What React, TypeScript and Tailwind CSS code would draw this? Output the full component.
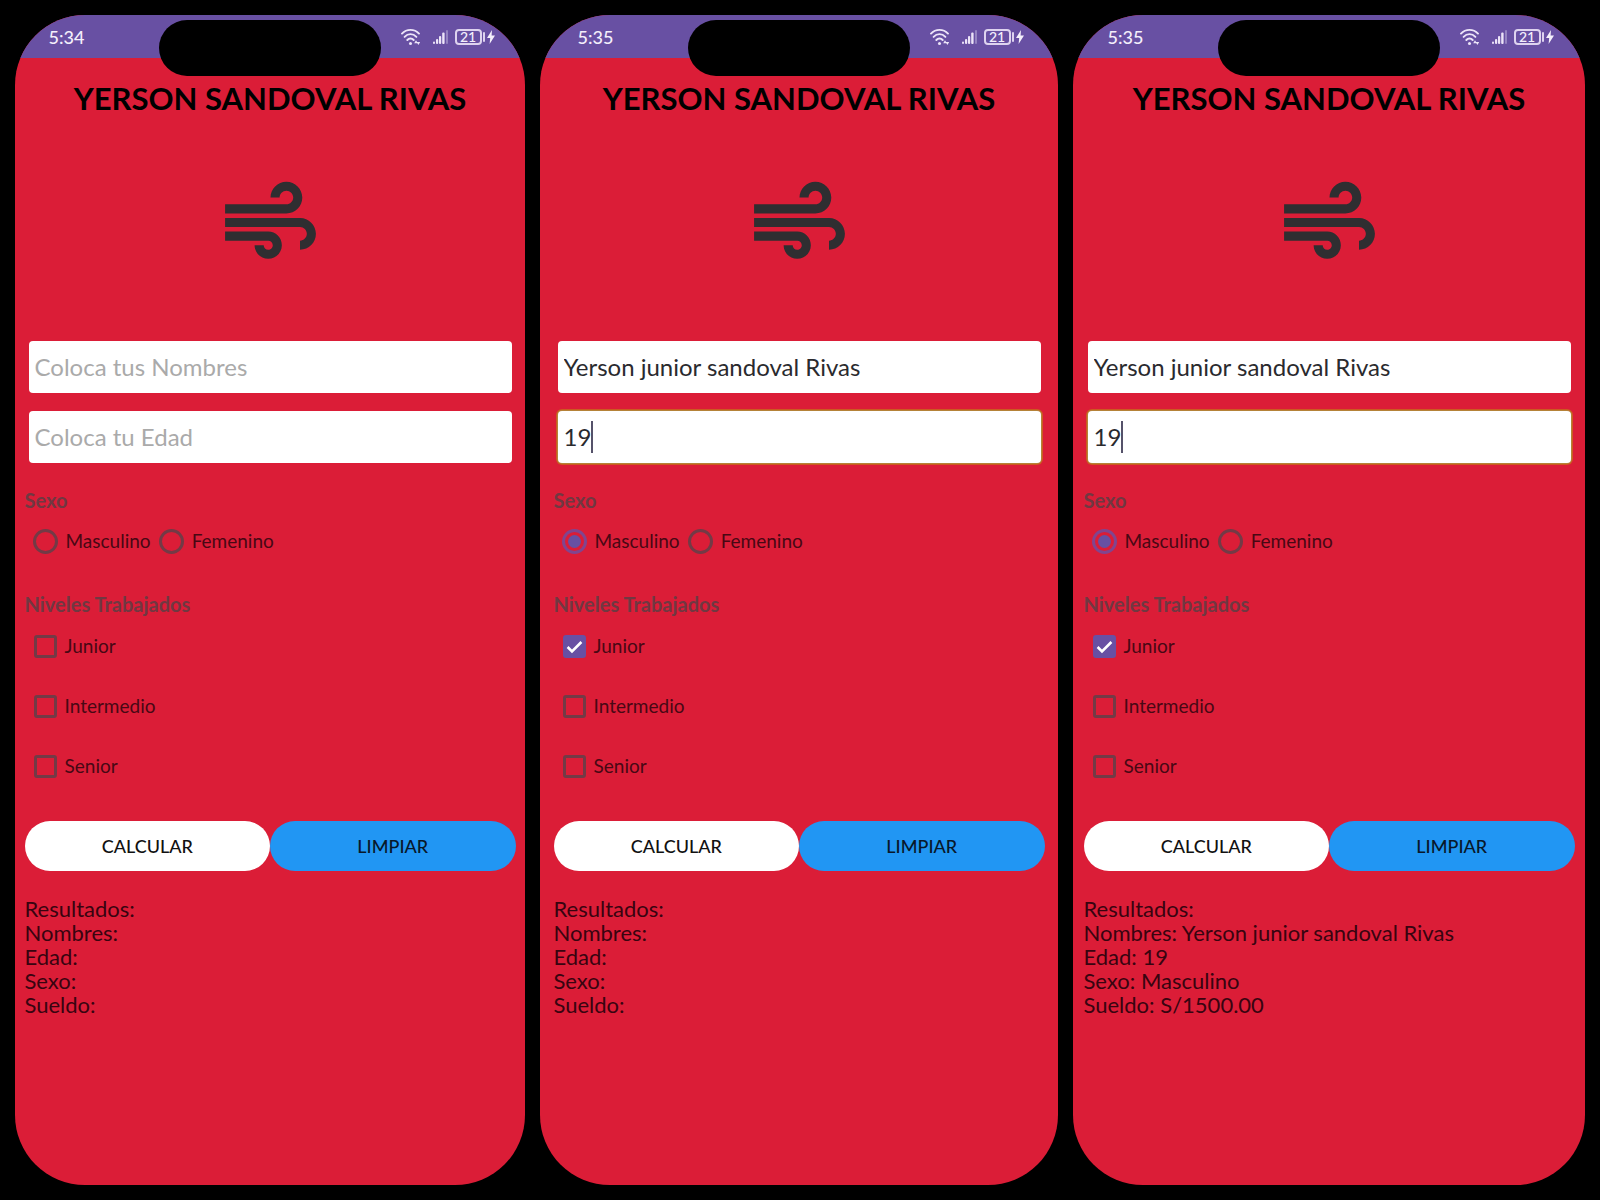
import { useState } from "react";

type Phone = {
  id: string;
  time: string;
  grow: string;
  nombres: string;
  edad: string;
  sexo: string;
  niveles: string[];
  focused: boolean;
  resultado: { nombres: string; edad: string; sexo: string; sueldo: string };
};

const vacio = { nombres: "", edad: "", sexo: "", sueldo: "" };

const PHONES: Phone[] = [
  {
    id: "a",
    time: "5:34",
    grow: "flex-[510]",
    nombres: "",
    edad: "",
    sexo: "",
    niveles: [],
    focused: false,
    resultado: vacio,
  },
  {
    id: "b",
    time: "5:35",
    grow: "flex-[518]",
    nombres: "Yerson junior sandoval Rivas",
    edad: "19",
    sexo: "Masculino",
    niveles: ["Junior"],
    focused: true,
    resultado: vacio,
  },
  {
    id: "c",
    time: "5:35",
    grow: "flex-[512]",
    nombres: "Yerson junior sandoval Rivas",
    edad: "19",
    sexo: "Masculino",
    niveles: ["Junior"],
    focused: true,
    resultado: {
      nombres: "Yerson junior sandoval Rivas",
      edad: "19",
      sexo: "Masculino",
      sueldo: "S/1500.00",
    },
  },
];

function WifiIcon() {
  return (
    <svg width="20" height="18" viewBox="0 0 20 18" fill="none" aria-hidden="true">
      <g stroke="#ece4f8" strokeWidth="1.9" strokeLinecap="round">
        <path d="M1 5.6C5.6 .6 13.4 .6 18 5.6" />
        <path d="M3.6 8.9C7 5.2 12 5.2 15.4 8.9" />
        <path d="M6.3 12C8.2 9.9 10.8 9.9 12.7 12" />
      </g>
      <circle cx="9.5" cy="15.4" r="1.5" fill="#ece4f8" />
      <path d="M15 12.2l1.8 3h-3.6zM17.4 17l-1.8-3h3.6z" fill="#ece4f8" />
    </svg>
  );
}

function SignalIcon() {
  return (
    <svg width="16" height="16" viewBox="0 0 16 16" fill="#ece4f8" aria-hidden="true">
      <rect x="0" y="12.5" width="2" height="2.5" rx="1" />
      <rect x="3" y="10" width="2.2" height="5" rx="1" />
      <rect x="6" y="7" width="2.2" height="8" rx="1" />
      <rect x="9.2" y="3.5" width="2.4" height="11.5" rx="1" />
      <rect x="13" y="1" width="2" height="14" rx="1" opacity=".35" />
    </svg>
  );
}

function BoltIcon() {
  return (
    <svg width="8" height="14" viewBox="0 0 8 14" fill="#f4effb" aria-hidden="true">
      <path d="M5 0L0 8h3.2L2.6 14L8 5.6H4.6z" />
    </svg>
  );
}

function WindIcon() {
  return (
    <svg
      className="mx-auto mt-[50px] block size-[109px]"
      viewBox="0 0 24 24"
      fill="#2f2e31"
      aria-hidden="true"
    >
      <path d="M14.5 17c0 1.65-1.35 3-3 3s-3-1.35-3-3h2c0 .55.45 1 1 1s1-.45 1-1-.45-1-1-1H2v-2h9.5c1.65 0 3 1.35 3 3zM19 6.5C19 4.57 17.43 3 15.5 3S12 4.57 12 6.5h2c0-.83.67-1.5 1.5-1.5s1.5.67 1.5 1.5S16.33 8 15.5 8H2v2h13.5c1.93 0 3.5-1.57 3.5-3.5zm-.5 4.5H2v2h16.5c.83 0 1.5.67 1.5 1.5s-.67 1.5-1.5 1.5v2c1.93 0 3.5-1.57 3.5-3.5S20.43 11 18.5 11z" />
    </svg>
  );
}

function StatusBar({ time }: { time: string }) {
  return (
    <header className="bg-[#6850a3]">
      <div className="mx-auto flex h-[43px] w-full max-w-[491px] items-center justify-between pr-[21px] pl-6 text-[#f4effb]">
        <time className="text-[18px] leading-6 font-medium">{time}</time>
        <div className="flex items-center">
          <WifiIcon />
          <span className="ml-3">
            <SignalIcon />
          </span>
          <span className="ml-1.5 flex h-4 w-[27px] items-center justify-center rounded-[4px] border-2 border-[#ded3ef] text-[14px] leading-4 font-medium">
            21
          </span>
          <span className="ml-px h-2.5 w-0.5 rounded-full bg-[#ded3ef]" />
          <span className="ml-0.5">
            <BoltIcon />
          </span>
        </div>
      </div>
    </header>
  );
}

function Field({
  id,
  label,
  value,
  onChange,
  focused = false,
}: {
  id: string;
  label: string;
  value: string;
  onChange: (v: string) => void;
  focused?: boolean;
}) {
  return (
    <div
      className={
        "flex h-[52px] items-center rounded-[4px] bg-white px-1.5 " +
        (focused ? "shadow-[0_0_0_1px_#b58238,0_0_0_2px_#cc5a20]" : "")
      }
    >
      <input
        id={id}
        aria-label={label}
        placeholder={label}
        value={value}
        onChange={(e) => onChange(e.target.value)}
        className={
          "h-full bg-transparent pb-0.5 text-[24px] text-[#2a2a2e] outline-none placeholder:text-[#aaaaaa] " +
          (focused ? "[field-sizing:content]" : "w-full")
        }
      />
      {focused && <span className="h-8 w-0.5 bg-[#55526a]" />}
    </div>
  );
}

function Radio({
  name,
  label,
  checked,
  onChange,
}: {
  name: string;
  label: string;
  checked: boolean;
  onChange: () => void;
}) {
  return (
    <label className="flex items-center gap-2 text-[19px] leading-6 text-[#480814]">
      <input
        type="radio"
        name={name}
        checked={checked}
        onChange={onChange}
        className="size-[25px] appearance-none rounded-full border-3 border-[#733a46] bg-clip-content p-[3px] checked:border-[#81458f] checked:bg-[#6850a3]"
      />
      {label}
    </label>
  );
}

function Checkbox({
  label,
  checked,
  onChange,
}: {
  label: string;
  checked: boolean;
  onChange: () => void;
}) {
  return (
    <label className="flex h-[60px] items-center gap-2 text-[19px] leading-6 text-[#480814]">
      <span className="relative flex">
        <input
          type="checkbox"
          checked={checked}
          onChange={onChange}
          className="size-[23px] appearance-none rounded-[3px] border-3 border-[#733a46] checked:border-[#6850a3] checked:bg-[#6850a3]"
        />
        {checked && (
          <svg
            className="pointer-events-none absolute inset-0 size-[23px]"
            viewBox="0 0 23 23"
            fill="none"
            stroke="#fff"
            strokeWidth="2.6"
            aria-hidden="true"
          >
            <path d="M4.6 12l4.4 4.4L18.4 7" />
          </svg>
        )}
      </span>
      {label}
    </label>
  );
}

function Screen({ phone }: { phone: Phone }) {
  const [nombres, setNombres] = useState(phone.nombres);
  const [edad, setEdad] = useState(phone.edad);
  const [sexo, setSexo] = useState(phone.sexo);
  const [niveles, setNiveles] = useState(phone.niveles);
  const [resultado, setResultado] = useState(phone.resultado);

  const toggle = (n: string) =>
    setNiveles((prev) => (prev.includes(n) ? prev.filter((x) => x !== n) : [...prev, n]));

  const calcular = () =>
    setResultado({
      nombres,
      edad,
      sexo,
      sueldo: "S/" + (niveles.length * 1500).toFixed(2),
    });

  const limpiar = () => {
    setNombres("");
    setEdad("");
    setSexo("");
    setNiveles([]);
    setResultado(vacio);
  };

  return (
    <section
      className={"relative min-w-0 overflow-hidden rounded-[70px] bg-[#db1d37] pb-16 " + phone.grow}
    >
      <StatusBar time={phone.time} />
      <div className="absolute top-[5px] left-1/2 h-14 w-[222px] -translate-x-1/2 rounded-full bg-black" />

      <main className="mx-auto w-full max-w-[491px] pt-5">
        <h1 className="text-center text-[31px] leading-10 font-bold text-black">
          YERSON SANDOVAL RIVAS
        </h1>
        <WindIcon />

        <div className="mt-16 flex flex-col gap-[18px] px-1">
          <Field
            id={"nombres-" + phone.id}
            label="Coloca tus Nombres"
            value={nombres}
            onChange={setNombres}
          />
          <Field
            id={"edad-" + phone.id}
            label="Coloca tu Edad"
            value={edad}
            onChange={setEdad}
            focused={phone.focused}
          />
        </div>

        <fieldset className="mt-[25px]">
          <legend className="text-[20px] leading-6 font-bold text-[#703842]">Sexo</legend>
          <div className="mt-[13px] flex h-8 items-center gap-2 pl-2">
            {["Masculino", "Femenino"].map((s) => (
              <Radio
                key={s}
                name={"sexo-" + phone.id}
                label={s}
                checked={sexo === s}
                onChange={() => setSexo(s)}
              />
            ))}
          </div>
        </fieldset>

        <fieldset className="mt-[35px]">
          <legend className="text-[20px] leading-6 font-bold text-[#703842]">
            Niveles Trabajados
          </legend>
          <div className="flex flex-col pl-[9px]">
            {["Junior", "Intermedio", "Senior"].map((n) => (
              <Checkbox
                key={n}
                label={n}
                checked={niveles.includes(n)}
                onChange={() => toggle(n)}
              />
            ))}
          </div>
        </fieldset>

        <div className="mt-[25px] flex text-[18px] leading-6 font-medium">
          <button
            type="button"
            onClick={calcular}
            className="h-[50px] flex-1 rounded-full bg-white text-[#111111]"
          >
            CALCULAR
          </button>
          <button
            type="button"
            onClick={limpiar}
            className="h-[50px] flex-1 rounded-full bg-[#2196f3] text-[#08182a]"
          >
            LIMPIAR
          </button>
        </div>

        <div className="mt-[26px] text-[22px] leading-6 text-[#380410]">
          <p>Resultados:</p>
          <p>Nombres: {resultado.nombres}</p>
          <p>Edad: {resultado.edad}</p>
          <p>Sexo: {resultado.sexo}</p>
          <p>Sueldo: {resultado.sueldo}</p>
        </div>
      </main>
    </section>
  );
}

export default function App() {
  return (
    <div className="flex min-h-screen gap-[15px] bg-black p-[15px] font-['Lato',sans-serif]">
      {PHONES.map((p) => (
        <Screen key={p.id} phone={p} />
      ))}
    </div>
  );
}
